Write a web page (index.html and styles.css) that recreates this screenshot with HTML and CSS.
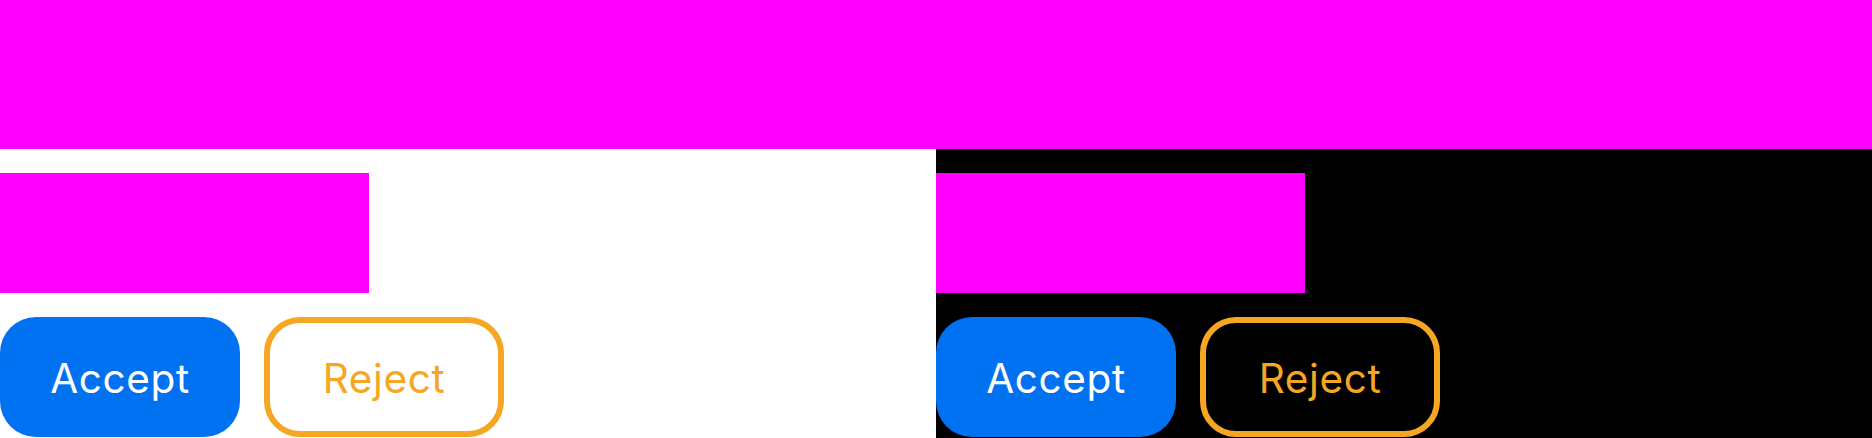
FILE: index.html
```html
<!DOCTYPE html>
<html>
<head>
<meta charset="utf-8">
<link rel="stylesheet" href="styles.css">
</head>
<body>
<div class="top-bar"></div>
<div class="panes">
  <div class="pane light">
    <div class="block"></div>
    <div class="actions">
      <button class="btn accept">Accept</button>
      <button class="btn reject">Reject</button>
    </div>
  </div>
  <div class="pane dark">
    <div class="block"></div>
    <div class="actions">
      <button class="btn accept">Accept</button>
      <button class="btn reject">Reject</button>
    </div>
  </div>
</div>
</body>
</html>
```
FILE: styles.css
```css
html, body {
  margin: 0;
  padding: 0;
  width: 1872px;
  height: 438px;
  overflow: hidden;
  font-family: Inter, "Noto Sans", sans-serif;
}
.top-bar {
  height: 149px;
  background: #ff00ff;
}
.panes {
  display: flex;
  height: 289px;
}
.pane {
  flex: 1;
  display: flex;
  flex-direction: column;
  gap: 24px;
  padding-top: 24px;
}
.light { background: #ffffff; }
.dark { background: #000000; }
.block {
  width: 369px;
  height: 120px;
  background: #ff00ff;
}
.actions {
  display: flex;
  gap: 24px;
}
.btn {
  box-sizing: border-box;
  width: 240px;
  height: 120px;
  border-radius: 36px;
  font-family: Inter, "Noto Sans", sans-serif;
  font-size: 40.5px;
  letter-spacing: 0.6px;
  font-weight: 400;
  padding: 2px 0 0 0;
  display: flex;
  align-items: center;
  justify-content: center;
}
.accept {
  background: #0071f0;
  color: #ffffff;
  border: none;
}
.reject {
  background: transparent;
  color: #f5a623;
  border: 6px solid #f5a623;
  border-radius: 36px;
}
```
